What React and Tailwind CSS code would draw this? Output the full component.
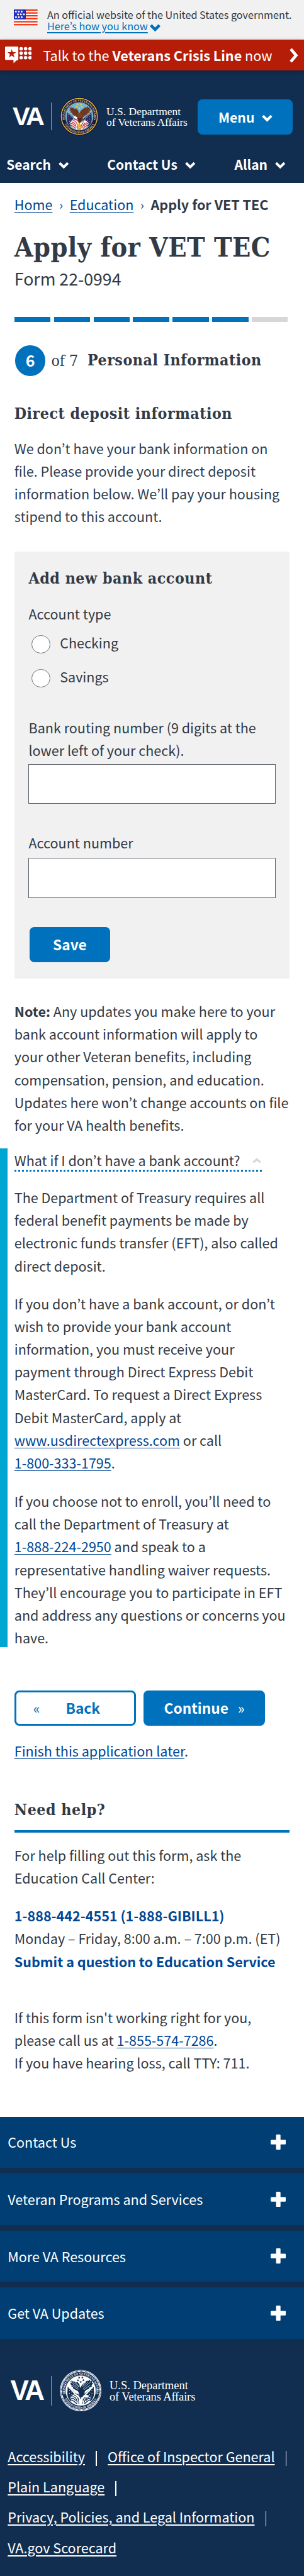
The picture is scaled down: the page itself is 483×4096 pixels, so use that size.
import React from "react";

const SANS = "font-['Noto_Sans_CJK_KR','Noto_Sans',sans-serif]";
const SLAB = "font-['DejaVu_Serif_Condensed','DejaVu_Serif',serif]";
const SERIF = "font-['Liberation_Serif',serif]";
const HEADING = `${SLAB} font-bold text-[24.7px] leading-[36px] tracking-[0.54px] whitespace-nowrap`;

function Lines({ items, className = "" }) {
  return (
    <p className={`pt-[0.9px] -mb-[0.9px] text-[21.55px] leading-[36.23px] whitespace-nowrap ${className}`}>
      {items.map((line, i) => (
        <span key={i} className="block">
          {line}
        </span>
      ))}
    </p>
  );
}

function A({ children }) {
  return (
    <a className="text-[#004795] underline decoration-[1.3px] underline-offset-[3px]" href="#">
      {children}
    </a>
  );
}

function Chevron({ className = "", width = 16.5, height = 12, stroke = 4 }) {
  return (
    <svg className={className} width={width} height={height} viewBox="0 0 16.5 12" preserveAspectRatio="none">
      <path d="M1.6 2.2 L8.25 9 L14.9 2.2" fill="none" stroke="currentColor" strokeWidth={stroke} />
    </svg>
  );
}

function Flag() {
  const stars = [
    [3, 3], [9, 3], [15, 3],
    [7.3, 9], [13.3, 9], [19.6, 9],
    [3, 15], [9, 15], [15, 15],
  ];
  return (
    <svg width="37.7" height="25.6" viewBox="0 0 50 34">
      <rect width="50" height="34" fill="#fff" />
      {[0, 6, 12, 18, 24.6, 30.8].map((y) => (
        <rect key={y} y={y} width="50" height="2.9" fill="#f02d0a" />
      ))}
      <rect width="25.3" height="21" fill="#2330b8" />
      {stars.map(([x, y], i) => (
        <rect key={i} x={x - 0.3} y={y - 0.3} width="3.5" height="3.5" fill="#fff" />
      ))}
    </svg>
  );
}

function CrisisIcon() {
  const dots = [0, 1, 2].flatMap((r) => [0, 1, 2].map((c) => [102 + c * 28, 14 + r * 28]));
  return (
    <svg width="42.5" height="26.5" viewBox="0 0 169 105">
      <path d="M6 0H78Q84 0 84 6V80Q84 84 78 86L72 88L54 105L53 84H6Q0 84 0 78V6Q0 0 6 0Z" fill="#fff" />
      <path d="M42 16L49 36H70L53 48L60 69L42 56L25 69L31 48L15 36H36Z" fill="#b51d09" />
      {dots.map(([x, y], i) => (
        <circle key={i} cx={x} cy={y} r="11" fill="#fff" />
      ))}
    </svg>
  );
}

function star(cx, cy, r) {
  let d = "";
  for (let i = 0; i < 10; i++) {
    const a = (Math.PI / 5) * i - Math.PI / 2;
    const q = i % 2 ? r * 0.42 : r;
    d += `${i ? "L" : "M"}${(cx + q * Math.cos(a)).toFixed(1)} ${(cy + q * Math.sin(a)).toFixed(1)}`;
  }
  return d + "Z";
}

function Seal({ size, mono, id }) {
  const c = mono
    ? { edge: "#fff", ring: "#112e51", rope: "#fff", text: "#fff", sky: "#fff", flag: "#112e51", wing: "#112e51", dark: "#fff", star: "#112e51", red: "#112e51", white: "#fff", gold: "#fff" }
    : { edge: "#1b1440", ring: "#1c1745", rope: "#e8bd35", text: "#d9cd86", sky: "#73b5d3", flag: "#24265f", wing: "#7a4021", dark: "#3d1d12", star: "#f6d447", red: "#cf2a35", white: "#fff", gold: "#eab32a" };
  const stars = [[-9, -77], [10, -77], [-16, -61], [16, -61], [0, -51]];
  return (
    <svg width={size} height={size} viewBox="-123 -123 246 246">
      <defs>
        <path id={`${id}-t`} d="M-86.7 33.3A93 93 0 1 1 86.7 33.3" />
        <path id={`${id}-b`} d="M-102 30A106 106 0 0 0 102 30" />
      </defs>
      <circle r="122" fill={c.edge} />
      {mono && <circle r="119" fill="#112e51" />}
      <circle r="113.5" fill="none" stroke={c.rope} strokeWidth={mono ? 10 : 6} strokeDasharray={mono ? "5 2.4" : undefined} />
      <circle r="109" fill={c.ring} />
      <circle r="88" fill={c.sky} stroke={mono ? "#fff" : "#b39a4a"} strokeWidth="2" />
      <g fill={c.text} className={`${SERIF} font-bold`} fontSize="18.5">
        <text textAnchor="middle" textLength="334" lengthAdjust="spacingAndGlyphs">
          <textPath href={`#${id}-t`} startOffset="50%">DEPARTMENT OF VETERANS AFFAIRS</textPath>
        </text>
        <text textAnchor="middle" textLength="232" lengthAdjust="spacingAndGlyphs">
          <textPath href={`#${id}-b`} startOffset="50%">UNITED STATES OF AMERICA</textPath>
        </text>
      </g>
      {!mono && (
        <g fill={c.text}>
          <circle cx="-97" cy="20" r="3" />
          <circle cx="97" cy="20" r="3" />
        </g>
      )}
      {stars.map(([x, y], i) => (
        <path key={i} d={star(x, y, 8)} fill={c.star} />
      ))}
      {/* flags */}
      <path d="M-76 -28L-20 22L-28 44L-60 62Q-82 38 -78 6Z" fill={c.flag} />
      <path d="M76 -28L20 22L28 44L60 62Q82 38 78 6Z" fill={c.flag} />
      <g fill={c.white}>
        {[[-66, 0], [-54, 8], [-66, 16], [-52, 24], [-62, 32], [-40, 18], [-68, -12], [66, 0], [54, 8], [66, 16], [52, 24], [62, 32], [40, 18], [68, -12]].map(([x, y], i) => (
          <circle key={i} cx={x} cy={y} r="2.4" />
        ))}
      </g>
      <path d="M-62 44Q-50 28 -34 18L-8 24L4 66L-14 84Q-46 74 -62 44Z" fill={c.white} />
      <path d="M62 44Q50 32 34 36L4 40L0 70L14 84Q46 74 62 44Z" fill={c.white} />
      <g fill="none" stroke={c.red} strokeWidth="5">
        <path d="M-58 46Q-40 42 -30 60" />
        <path d="M-48 36Q-26 34 -20 70" />
        <path d="M-38 26Q-12 28 -10 78" />
        <path d="M-32 19Q-4 20 0 50" />
        <path d="M58 46Q40 44 30 60" />
        <path d="M48 40Q26 40 20 72" />
        <path d="M34 38Q12 40 10 78" />
        <path d="M-54 54Q-36 62 -22 78M54 54Q36 62 22 78" />
      </g>
      <path d="M-78 -30L-16 38M78 -30L14 40" stroke={mono ? "#fff" : "#e9e4d4"} strokeWidth={mono ? 7 : 2.5} />
      {/* eagle */}
      <path d="M-66 -59L-54 -50L-54 -62L-43 -50L-42 -58L-28 -46L-20 -52L-8 -38L-2 -16L6 -30L14 -40L24 -46L36 -58L44 -56L54 -65L56 -54L68 -60L66 -46L74 -42L64 -32L66 -24L52 -18L48 -10L34 -4L24 6L22 22L8 40L-4 40L-10 18L-20 2L-34 -6L-46 -14L-44 -20L-56 -26L-52 -32L-64 -40L-56 -44Z" fill={c.wing} />
      <g fill="none" stroke={c.dark} strokeWidth="2.6">
        <path d="M-58 -50L-14 -14M-46 -52L-8 -20M-50 -32L-14 -6M60 -52L14 -12M44 -52L10 -22M56 -32L18 -4M-30 -46L-6 -24M30 -50L8 -28" />
      </g>
      <path d="M-12 4Q0 20 16 6Q14 30 4 38Q-8 30 -12 4Z" fill={mono ? "#112e51" : "#4d2817"} />
      <path d="M-36 4Q-30 -4 -20 2L-10 10L-18 16L-32 12L-38 14Z" fill={c.white} />
      <path d="M22 38L32 24L50 30L42 42Z" fill={c.white} />
      <path d="M-12 60L-6 48L0 56L6 48L14 60L6 82L0 66L-6 84Z" fill={c.gold} />
    </svg>
  );
}

function VaMark({ footer }) {
  return (
    <span
      className={`font-['Liberation_Sans',sans-serif] font-bold text-white ${
        footer ? "text-[44px] leading-[32px] tracking-[-3.2px] w-[64.9px]" : "text-[41.5px] leading-[30px] tracking-[-3.6px] w-[61.2px]"
      }`}
    >
      VA
    </span>
  );
}

function NavItem({ label, className }) {
  return (
    <button className={`flex items-center font-bold text-[21px] leading-[36px] text-white whitespace-nowrap ${className}`}>
      {label}
      <Chevron className="ml-[12.3px] mt-[2.5px]" width={16.5} height={11.5} />
    </button>
  );
}

function Field({ lines, className, gap }) {
  return (
    <label className={`block ${className}`}>
      <Lines items={lines} />
      <input className={`block w-full h-[63.5px] border-[1.5px] border-[#5b616b] bg-white ${gap}`} />
    </label>
  );
}

function Radio({ label, className }) {
  return (
    <label className={`flex items-center h-[36.2px] pl-[4.6px] ${className}`}>
      <span className="mt-[6px] size-[29.8px] rounded-full border-[1.3px] border-[#757575] bg-white" />
      <span className="ml-[15.3px] pt-[2px] text-[21.55px] leading-[36.2px]">{label}</span>
    </label>
  );
}

function FooterLink({ children, bar = true }) {
  return (
    <>
      <a className="underline decoration-[1.5px] underline-offset-[3px]" href="#">
        {children}
      </a>
      {bar && <span className="ml-[17.3px] mr-[17.3px] inline-block w-[1.5px] h-[24px] bg-white align-[-6px]" />}
    </>
  );
}

export default function App() {
  return (
    <div className={`w-[483px] h-[4096px] overflow-hidden bg-white text-[#323a45] ${SANS}`}>
      <div className="flex h-[63.4px] bg-[#f1f1f1] pl-[22.1px] pt-[15px] text-[16.2px] leading-[17.4px]">
        <Flag />
        <div className="ml-[15.2px] whitespace-nowrap">
          <div className="mt-[0.2px]">An official website of the United States government.</div>
          <div className="flex items-center text-[#0071bc]">
            <span className="underline decoration-[1.5px] underline-offset-[2.5px]">Here’s how you know</span>
            <Chevron className="ml-[3.5px] mt-[4.5px]" width={17} height={12} stroke={4.6} />
          </div>
        </div>
      </div>

      <div className="relative z-10 flex items-center h-[48.3px] bg-[#b51d09] pl-[7.5px] pr-[9.5px] text-white shadow-[0_2px_6px_rgba(0,0,0,0.3)]">
        <CrisisIcon />
        <span className="ml-[18.4px] text-[21.6px] leading-[36px] whitespace-nowrap">
          Talk to the <b>Veterans Crisis Line</b> now
        </span>
        <svg className="ml-auto" width="14" height="26" viewBox="0 0 14 26">
          <path d="M2 3L10.5 13L2 23" fill="none" stroke="#fff" strokeWidth="4.6" />
        </svg>
      </div>

      <header className="h-[179.6px] bg-[#112e51] text-white">
        <div className="flex items-center h-[131px] pt-[15.4px] pl-[20.1px]">
          <VaMark />
          <span className="w-px h-[44.5px] bg-[#8fa0b5]" />
          <span className="ml-[12.8px]">
            <Seal size={62} id="hs" />
          </span>
          <div className={`ml-[12px] mt-[3px] w-[145.3px] text-[17.5px] leading-[17.3px] whitespace-nowrap ${SERIF}`}>
            <div>U.S. Department</div>
            <div className="tracking-[-0.15px]">of Veterans Affairs</div>
          </div>
          <button className="mt-[3px] flex h-[56px] w-[151px] items-center justify-center rounded-[7.5px] bg-[#0071bc] text-[21.2px] font-bold">
            Menu
            <Chevron className="ml-[11.5px] mt-[4px]" width={16.8} height={12} />
          </button>
        </div>
        <div className="flex pt-[0.5px] pl-[10.2px]">
          <NavItem label="Search" className="w-[160.1px]" />
          <NavItem label="Contact Us" className="w-[202.2px]" />
          <NavItem label="Allan" className="" />
        </div>
      </header>

      <main className="pl-[22.8px] pr-[22.8px]">
        <nav className="mt-[15.6px] flex items-center text-[21.55px] leading-[36px] whitespace-nowrap">
          <A>Home</A>
          <span className="w-[27.2px] text-center text-[19px] text-[#004795]">›</span>
          <A>Education</A>
          <span className="w-[27.2px] text-center text-[19px] text-[#004795]">›</span>
          <b>Apply for VET TEC</b>
        </nav>
        <h1 className={`mt-[25.6px] ${SLAB} text-[42.8px] font-bold leading-[50px] tracking-[0.42px] whitespace-nowrap`}>Apply for VET TEC</h1>
        <div className="mt-[6.6px] text-[26.7px] leading-[36px]">Form 22-0994</div>

        <div className="mt-[43.1px] flex h-[8.3px] gap-[5.6px]">
          {[1, 2, 3, 4, 5, 6, 7].map((n) => (
            <span key={n} className={n < 7 ? "w-[57.3px] bg-[#0071bc]" : "w-[57.3px] bg-[#d6d7d9]"} />
          ))}
        </div>

        <div className="mt-[36.7px] flex h-[48.4px] items-center pl-[1.2px]">
          <span className="flex size-[48.4px] items-center justify-center rounded-full bg-[#0071bc] pb-[1px] text-[25px] font-bold leading-none text-white">6</span>
          <span className={`ml-[9px] w-[57.5px] pt-[1px] ${SLAB} text-[24.7px] leading-[36px] whitespace-nowrap`}>of 7</span>
          <h2 className={HEADING}>Personal Information</h2>
        </div>

        <h3 className={`mt-[42.9px] ${HEADING}`}>Direct deposit information</h3>
        <Lines
          className="mt-[17.4px] text-[#2e4052]"
          items={[
            "We don’t have your bank information on",
            "file. Please provide your direct deposit",
            "information below. We’ll pay your housing",
            "stipend to this account.",
          ]}
        />

        <section className="mt-[38.3px] h-[679.3px] bg-[#f1f1f1] px-[22.7px] pt-[24.8px]">
          <h4 className={HEADING}>Add new bank account</h4>
          <Lines className="mt-[18.9px]" items={["Account type"]} />
          <Radio className="mt-[10.4px]" label="Checking" />
          <Radio className="mt-[17.8px]" label="Savings" />
          <Field className="mt-[44.3px]" gap="mt-[4.5px]" lines={["Bank routing number (9 digits at the", "lower left of your check)."]} />
          <Field className="mt-[43.2px]" gap="mt-[6.6px]" lines={["Account number"]} />
          <button className="ml-[1.3px] mt-[46.5px] flex h-[56px] w-[128.3px] items-center justify-center rounded-[7.5px] bg-[#0071bc] text-[22.7px] font-bold text-white">
            Save
          </button>
        </section>

        <Lines
          className="mt-[32.6px]"
          items={[
            <><b>Note:</b> Any updates you make here to your</>,
            "bank account information will apply to",
            "your other Veteran benefits, including",
            "compensation, pension, and education.",
            "Updates here won’t change accounts on file",
            "for your VA health benefits.",
          ]}
        />

        <section className="ml-[-22.8px] mt-[19.7px] h-[792.5px] border-l-[12px] border-[#00a6d2] pl-[10.8px]">
          <button className="flex h-[36.5px] w-[395.6px] items-start bg-[repeating-linear-gradient(90deg,#0071bc_0,#0071bc_3px,transparent_3px,transparent_6px)] bg-[length:100%_3px] bg-bottom bg-no-repeat text-[21.55px] leading-[36.23px] whitespace-nowrap">
            <span className="pt-[0.7px]">What if I don’t have a bank account?</span>
            <svg className="ml-[19.6px] mt-[14.5px]" width="14" height="9" viewBox="0 0 14 9">
              <path d="M1.2 7.2L7 2.4L12.8 7.2" fill="none" stroke="#d6d7d9" strokeWidth="3.2" />
            </svg>
          </button>
          <Lines
            className="mt-[22.4px]"
            items={[
              "The Department of Treasury requires all",
              "federal benefit payments be made by",
              "electronic funds transfer (EFT), also called",
              "direct deposit.",
            ]}
          />
          <Lines
            className="mt-[23.8px]"
            items={[
              "If you don’t have a bank account, or don’t",
              "wish to provide your bank account",
              "information, you must receive your",
              "payment through Direct Express Debit",
              "MasterCard. To request a Direct Express",
              "Debit MasterCard, apply at",
              <><A>www.usdirectexpress.com</A> or call</>,
              <><A>1-800-333-1795</A>.</>,
            ]}
          />
          <Lines
            className="mt-[24.6px]"
            items={[
              "If you choose not to enroll, you’ll need to",
              "call the Department of Treasury at",
              <><A>1-888-224-2950</A> and speak to a</>,
              "representative handling waiver requests.",
              "They’ll encourage you to participate in EFT",
              "and address any questions or concerns you",
              "have.",
            ]}
          />
        </section>

        <div className="mt-[69.3px] flex h-[56px] gap-[12px] text-[22.7px] font-bold">
          <button className="flex w-[193.3px] items-center rounded-[7.5px] border-[3px] border-[#0071bc] pl-[27px] text-[#0071bc]">
            <span className="w-[51.7px] text-left font-normal">«</span>Back
          </button>
          <button className="flex w-[193.3px] items-center rounded-[7.5px] bg-[#0071bc] pl-[32.5px] text-white">
            Continue<span className="ml-[15px] font-normal">»</span>
          </button>
        </div>
        <Lines className="mt-[21px]" items={[<><A>Finish this application later</A>.</>]} />

        <h3 className={`mt-[59.4px] ${HEADING}`}>Need help?</h3>
        <div className="mt-[13.7px] h-[4px] bg-[#0071bc]" />
        <Lines className="mt-[16.5px]" items={["For help filling out this form, ask the", "Education Call Center:"]} />
        <Lines
          className="mt-[24.1px]"
          items={[
            <b className="text-[#004795]">1-888-442-4551 (1-888-GIBILL1)</b>,
            "Monday – Friday, 8:00 a.m. – 7:00 p.m. (ET)",
            <b className="text-[#004795]">Submit a question to Education Service</b>,
          ]}
        />
        <Lines
          className="mt-[52.9px]"
          items={[
            "If this form isn't working right for you,",
            <>please call us at <A>1-855-574-7286</A>.</>,
            "If you have hearing loss, call TTY: 711.",
          ]}
        />
      </main>

      <footer className="mt-[68px] h-[731px] bg-[#112e51] text-white">
        <div className="flex flex-col gap-[8.8px]">
          {["Contact Us", "Veteran Programs and Services", "More VA Resources", "Get VA Updates"].map((t) => (
            <div key={t} className="flex h-[81.8px] items-center justify-between bg-[#003e73] pl-[12.3px] pr-[28.7px] text-[21.55px] leading-[36px]">
              <span>{t}</span>
              <svg width="24.3" height="24.3" viewBox="0 0 24.3 24.3">
                <path d="M8.6 1.5Q8.6 0 10.1 0H14.2Q15.7 0 15.7 1.5V8.6H22.8Q24.3 8.6 24.3 10.1V14.2Q24.3 15.7 22.8 15.7H15.7V22.8Q15.7 24.3 14.2 24.3H10.1Q8.6 24.3 8.6 22.8V15.7H1.5Q0 15.7 0 14.2V10.1Q0 8.6 1.5 8.6H8.6Z" fill="#fff" />
              </svg>
            </div>
          ))}
        </div>
        <div className="mt-[49.2px] flex h-[66.4px] items-center pl-[16.4px]">
          <VaMark footer />
          <span className="w-px h-[47px] bg-[#8fa0b5]" />
          <span className="ml-[12.8px]">
            <Seal size={66.4} mono id="fs" />
          </span>
          <div className={`ml-[12.5px] mt-[2px] text-[18.5px] leading-[18.3px] whitespace-nowrap ${SERIF}`}>
            <div>U.S. Department</div>
            <div className="tracking-[-0.15px]">of Veterans Affairs</div>
          </div>
        </div>
        <div className="mt-[46.9px] pl-[12.3px] text-[21.55px] leading-[48.4px] whitespace-nowrap">
          <div>
            <FooterLink>Accessibility</FooterLink>
            <FooterLink>Office of Inspector General</FooterLink>
          </div>
          <div>
            <FooterLink>Plain Language</FooterLink>
          </div>
          <div>
            <FooterLink>Privacy, Policies, and Legal Information</FooterLink>
          </div>
          <div>
            <FooterLink bar={false}>VA.gov Scorecard</FooterLink>
          </div>
        </div>
      </footer>
    </div>
  );
}
